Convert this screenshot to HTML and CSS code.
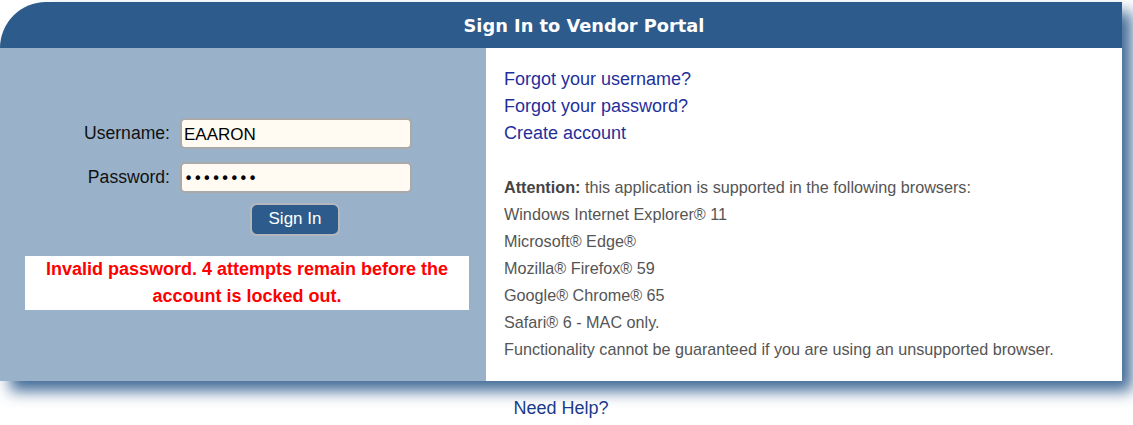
FILE: index.html
```html
<!DOCTYPE html>
<html>
<head>
<meta charset="utf-8">
<link rel="stylesheet" href="styles.css">
</head>
<body>
<div class="panel">
  <div class="header"><h1>Sign In to Vendor Portal</h1></div>
  <div class="body">
    <div class="left">
      <form class="form">
        <div class="row">
          <label>Username:</label>
          <input type="text" class="field" value="EAARON">
        </div>
        <div class="row">
          <label>Password:</label>
          <input type="password" class="field pw" value="password">
        </div>
        <div class="btnrow"><button type="button" class="btn">Sign In</button></div>
      </form>
      <div class="error">Invalid password. 4 attempts remain before the account is locked out.</div>
    </div>
    <div class="right">
      <div class="links">
        <a href="#">Forgot your username?</a>
        <a href="#">Forgot your password?</a>
        <a href="#">Create account</a>
      </div>
      <div class="info">
        <p><b>Attention:</b> this application is supported in the following browsers:</p>
        <p>Windows Internet Explorer® 11</p>
        <p>Microsoft® Edge®</p>
        <p>Mozilla® Firefox® 59</p>
        <p>Google® Chrome® 65</p>
        <p>Safari® 6 - MAC only.</p>
        <p>Functionality cannot be guaranteed if you are using an unsupported browser.</p>
      </div>
    </div>
  </div>
</div>
<div class="help"><a href="#">Need Help?</a></div>
</body>
</html>
```

FILE: styles.css
```css
* { box-sizing: border-box; }
html, body { margin: 0; padding: 0; background: #fff; }
body {
  font-family: "Liberation Sans", Arial, sans-serif;
  padding-top: 2px;
  width: 1133px;
  height: 425px;
  overflow: hidden;
}
.panel {
  width: 1122px;
  border-top-left-radius: 50px;
  box-shadow: 10px 10px 15px rgba(44, 90, 140, 0.9);
  background: #fff;
}
.header {
  height: 46px;
  background: #2d5b8c;
  border-top-left-radius: 50px;
  display: flex;
  align-items: center;
  justify-content: center;
  padding-left: 46px;
}
.header h1 {
  margin: 0;
  color: #fff;
  font-family: "DejaVu Sans", Verdana, sans-serif;
  font-weight: bold;
  font-size: 17.8px;
}
.body {
  display: flex;
  height: 333px;
}
.left {
  width: 486px;
  background: #99b2ca;
  padding: 70px 17px 0 25px;
}
.form { display: flex; flex-direction: column; }
.row {
  display: flex;
  align-items: center;
  height: 31px;
  margin-bottom: 13px;
}
.row label {
  width: 171px;
  text-align: right;
  padding-right: 1px;
  font-size: 17.6px;
  color: #111;
  margin-left: -25px;
}
.field {
  margin-left: 9px;
  width: 232px;
  height: 31px;
  background: #fffbf3;
  border: 2px solid #a9a9a9;
  border-radius: 5px;
  font-family: "Liberation Sans", Arial, sans-serif;
  font-size: 17px;
  color: #000;
  padding: 2px 2px 0;
  outline: none;
}
.field.pw {
  font-family: "DejaVu Sans", sans-serif;
  font-size: 15.5px;
}
.btnrow { padding-left: 225px; margin-top: -3px; }
.btn {
  width: 90px;
  height: 33px;
  background: #2d5b8c;
  color: #fff;
  border: 2px solid #b4b8bc;
  border-radius: 7px;
  font-family: "Liberation Sans", Arial, sans-serif;
  font-size: 17px;
  padding: 0 0 2px;
}
.error {
  margin-top: 20px;
  width: 444px;
  height: 54px;
  background: #fff;
  color: #f00;
  font-weight: bold;
  font-size: 18px;
  line-height: 27px;
  text-align: center;
  padding: 0 8px;
}
.right {
  flex: 1;
  padding: 18px 18px 0 18px;
  background: #fff;
}
.links { display: flex; flex-direction: column; }
.links a {
  color: #1f2f9c;
  text-decoration: none;
  font-size: 18px;
  line-height: 27px;
}
.info { margin-top: 27px; }
.info p {
  margin: 0;
  color: #555;
  font-size: 16.2px;
  line-height: 27px;
}
.info b { color: #444; }
.help {
  width: 1122px;
  text-align: center;
  margin-top: 17px;
}
.help a {
  color: #1a3a8c;
  text-decoration: none;
  font-size: 18px;
}
```
